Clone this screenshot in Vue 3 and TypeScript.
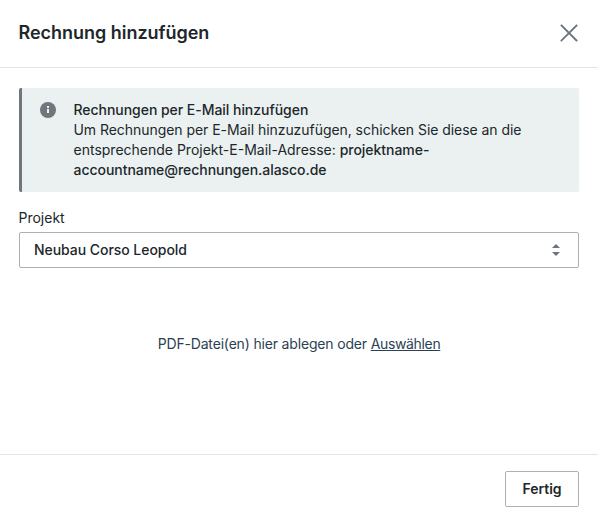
<script setup lang="ts">
const project: string = 'Neubau Corso Leopold'
</script>

<template>
  <div class="dialog">
    <header class="header">
      <h1>Rechnung hinzufügen</h1>
      <button class="close" aria-label="Schließen">
        <svg width="18" height="18" viewBox="0 0 18 18"><path d="M1.5 1.5l15 15M16.5 1.5l-15 15" stroke="#6c757b" stroke-width="1.8" stroke-linecap="square" /></svg>
      </button>
    </header>
    <main class="body">
      <section class="notice">
        <svg class="info" width="16" height="16" viewBox="0 0 16 16"><circle cx="8" cy="8" r="8" fill="#6f767c" /><path d="M7 4h2v2H7zM7 7h2v4H7z" fill="#ebf1f1" /></svg>
        <div class="message">
          <strong>Rechnungen per E-Mail hinzufügen</strong><br />
          Um Rechnungen per E-Mail hinzuzufügen, schicken Sie diese an die<br />
          <span class="address">entsprechende Projekt-E-Mail-Adresse: </span><strong>projektname-<br />accountname@rechnungen.alasco.de</strong>
        </div>
      </section>
      <div class="label">Projekt</div>
      <button class="select">
        <span>{{ project }}</span>
        <svg width="8" height="12" viewBox="0 0 8 12"><path d="M0 4L4 0l4 4zM0 8l4 4 4-4z" fill="#6c737a" /></svg>
      </button>
      <div class="drop">PDF-Datei(en) hier ablegen oder&nbsp;<a>Auswählen</a></div>
    </main>
    <footer class="footer"><button class="done">Fertig</button></footer>
  </div>
</template>

<style>
body { background: #fff; }
</style>
<style scoped>
.dialog { box-sizing: border-box; width: 598px; height: 521px; display: flex; flex-direction: column; font: 14px/20px Inter, sans-serif; color: #20272b; }
.dialog * { box-sizing: border-box; }
button { font: inherit; color: inherit; background: #fff; margin: 0; padding: 0; border: 0; }
.header { height: 68px; border-bottom: 1px solid #e2e4e6; display: flex; justify-content: space-between; align-items: center; padding: 0 20px 2px 18.5px; }
h1 { margin: 0; font-size: 18px; line-height: 24px; font-weight: 600; letter-spacing: -0.03px; }
.close { width: 18px; height: 18px; display: flex; }
.body { flex: 1; padding: 20px 19px 0; display: flex; flex-direction: column; }
.notice { height: 104px; background: #ebf1f1; border-left: 3px solid #6f757c; border-radius: 2px; display: flex; padding: 12px 0 0 18px; }
.info { margin-top: 2px; flex: none; }
.message { margin-left: 17.5px; white-space: nowrap; letter-spacing: -0.05px; }
.address { letter-spacing: 0; }
strong { font-weight: 500; letter-spacing: -0.04px; }
.label { margin: 16px 0 4px -0.5px; }
.select { height: 36px; border: 1px solid #aab2b6; border-radius: 2px; display: flex; align-items: center; justify-content: space-between; padding: 0 18px 0 14px; font-weight: 500; letter-spacing: -0.05px; }
.drop { margin-top: 66px; text-align: center; color: #2c4254; letter-spacing: -0.17px; }
.drop a { text-decoration: underline; letter-spacing: -0.35px; }
.footer { height: 67px; border-top: 1px solid #e2e4e6; display: flex; justify-content: flex-end; padding: 16px 19px 0; }
.done { width: 74px; height: 36px; border: 1px solid #aab2b6; border-radius: 2px; font-weight: 600; }
</style>
